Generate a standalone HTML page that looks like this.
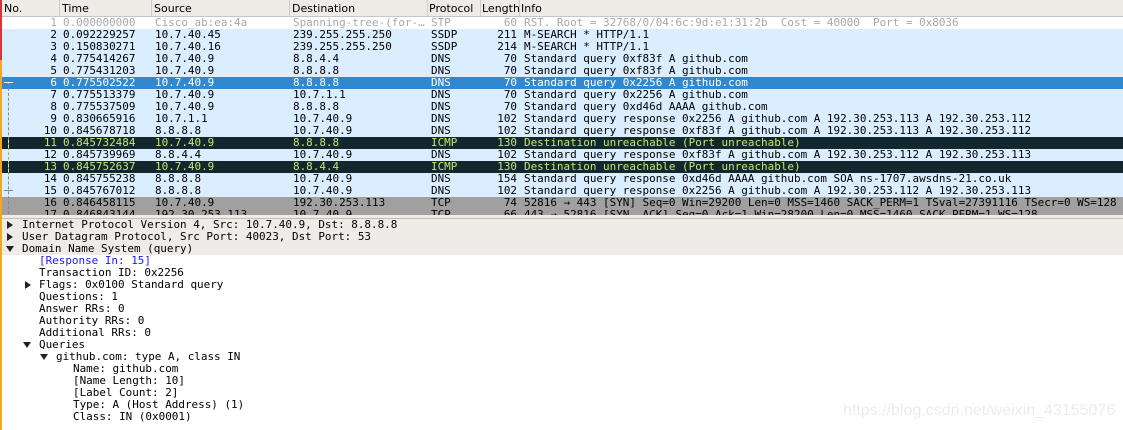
<!DOCTYPE html>
<html><head><meta charset="utf-8"><style>
*{margin:0;padding:0;box-sizing:border-box}
body{width:1123px;height:430px;overflow:hidden;background:#fff;position:relative;font-family:"DejaVu Sans Mono","Liberation Mono",monospace;font-size:10.95px}
.hdr{position:absolute;left:0;top:0;width:1123px;height:17px;background:#efebe7;border-bottom:1px solid #c9c5c0;font-family:"DejaVu Sans","Liberation Sans",sans-serif;font-size:11px;color:#000}
.hdr span{position:absolute;top:2px}
.hdr i{position:absolute;top:0;height:16px;border-left:1px solid #cfcbc6}
.r{position:absolute;left:0;width:1123px;height:12px;line-height:12px;white-space:pre;color:#000}
.r span{position:absolute;top:0}
.b{background:#daeeff}
.sel{background:#3089d0;color:#fff}
.dk{background:#12272e;color:#c4e86c}
.gr{background:#a0a0a0;color:#000}
.w1{background:#fff;color:#a8a8a8}
.no{right:1066px;text-align:right}
.len{right:606px;text-align:right}
.d{position:absolute;left:0;width:1123px;height:12px;line-height:12px;white-space:pre;color:#000}
.d span{position:absolute;top:0}
.tri{position:absolute;width:0;height:0}
.tr{border-top:4px solid transparent;border-bottom:4px solid transparent;border-left:6px solid #222;top:2px}
.td{border-left:4px solid transparent;border-right:4px solid transparent;border-top:6px solid #222;top:3px}
</style></head><body>
<div class="hdr">
<span style="left:4px">No.</span><i style="left:59px"></i>
<span style="left:62px">Time</span><i style="left:151px"></i>
<span style="left:154px">Source</span><i style="left:289px"></i>
<span style="left:292px">Destination</span><i style="left:427px"></i>
<span style="left:429px">Protocol</span><i style="left:480px"></i>
<span style="left:482px">Length</span><i style="left:519px"></i>
<span style="left:521px">Info</span>
</div>

<div class="r w1" style="top:17px"><span class="no">1</span><span style="left:63px">0.000000000</span><span style="left:155px">Cisco_ab:ea:4a</span><span style="left:293px">Spanning-tree-(for-…</span><span style="left:431px">STP</span><span class="len">60</span><span style="left:524px">RST. Root = 32768/0/04:6c:9d:e1:31:2b  Cost = 40000  Port = 0x8036</span></div>
<div class="r b" style="top:29px"><span class="no">2</span><span style="left:63px">0.092229257</span><span style="left:155px">10.7.40.45</span><span style="left:293px">239.255.255.250</span><span style="left:431px">SSDP</span><span class="len">211</span><span style="left:524px">M-SEARCH * HTTP/1.1</span></div>
<div class="r b" style="top:41px"><span class="no">3</span><span style="left:63px">0.150830271</span><span style="left:155px">10.7.40.16</span><span style="left:293px">239.255.255.250</span><span style="left:431px">SSDP</span><span class="len">214</span><span style="left:524px">M-SEARCH * HTTP/1.1</span></div>
<div class="r b" style="top:53px"><span class="no">4</span><span style="left:63px">0.775414267</span><span style="left:155px">10.7.40.9</span><span style="left:293px">8.8.4.4</span><span style="left:431px">DNS</span><span class="len">70</span><span style="left:524px">Standard query 0xf83f A github.com</span></div>
<div class="r b" style="top:65px"><span class="no">5</span><span style="left:63px">0.775431203</span><span style="left:155px">10.7.40.9</span><span style="left:293px">8.8.8.8</span><span style="left:431px">DNS</span><span class="len">70</span><span style="left:524px">Standard query 0xf83f A github.com</span></div>
<div class="r sel" style="top:77px"><span class="no">6</span><span style="left:63px">0.775502522</span><span style="left:155px">10.7.40.9</span><span style="left:293px">8.8.8.8</span><span style="left:431px">DNS</span><span class="len">70</span><span style="left:524px">Standard query 0x2256 A github.com</span></div>
<div class="r b" style="top:89px"><span class="no">7</span><span style="left:63px">0.775513379</span><span style="left:155px">10.7.40.9</span><span style="left:293px">10.7.1.1</span><span style="left:431px">DNS</span><span class="len">70</span><span style="left:524px">Standard query 0x2256 A github.com</span></div>
<div class="r b" style="top:101px"><span class="no">8</span><span style="left:63px">0.775537509</span><span style="left:155px">10.7.40.9</span><span style="left:293px">8.8.8.8</span><span style="left:431px">DNS</span><span class="len">70</span><span style="left:524px">Standard query 0xd46d AAAA github.com</span></div>
<div class="r b" style="top:113px"><span class="no">9</span><span style="left:63px">0.830665916</span><span style="left:155px">10.7.1.1</span><span style="left:293px">10.7.40.9</span><span style="left:431px">DNS</span><span class="len">102</span><span style="left:524px">Standard query response 0x2256 A github.com A 192.30.253.113 A 192.30.253.112</span></div>
<div class="r b" style="top:125px"><span class="no">10</span><span style="left:63px">0.845678718</span><span style="left:155px">8.8.8.8</span><span style="left:293px">10.7.40.9</span><span style="left:431px">DNS</span><span class="len">102</span><span style="left:524px">Standard query response 0xf83f A github.com A 192.30.253.113 A 192.30.253.112</span></div>
<div class="r dk" style="top:137px"><span class="no">11</span><span style="left:63px">0.845732484</span><span style="left:155px">10.7.40.9</span><span style="left:293px">8.8.8.8</span><span style="left:431px">ICMP</span><span class="len">130</span><span style="left:524px">Destination unreachable (Port unreachable)</span></div>
<div class="r b" style="top:149px"><span class="no">12</span><span style="left:63px">0.845739969</span><span style="left:155px">8.8.4.4</span><span style="left:293px">10.7.40.9</span><span style="left:431px">DNS</span><span class="len">102</span><span style="left:524px">Standard query response 0xf83f A github.com A 192.30.253.112 A 192.30.253.113</span></div>
<div class="r dk" style="top:161px"><span class="no">13</span><span style="left:63px">0.845752637</span><span style="left:155px">10.7.40.9</span><span style="left:293px">8.8.4.4</span><span style="left:431px">ICMP</span><span class="len">130</span><span style="left:524px">Destination unreachable (Port unreachable)</span></div>
<div class="r b" style="top:173px"><span class="no">14</span><span style="left:63px">0.845755238</span><span style="left:155px">8.8.8.8</span><span style="left:293px">10.7.40.9</span><span style="left:431px">DNS</span><span class="len">154</span><span style="left:524px">Standard query response 0xd46d AAAA github.com SOA ns-1707.awsdns-21.co.uk</span></div>
<div class="r b" style="top:185px"><span class="no">15</span><span style="left:63px">0.845767012</span><span style="left:155px">8.8.8.8</span><span style="left:293px">10.7.40.9</span><span style="left:431px">DNS</span><span class="len">102</span><span style="left:524px">Standard query response 0x2256 A github.com A 192.30.253.112 A 192.30.253.113</span></div>
<div class="r gr" style="top:197px"><span class="no">16</span><span style="left:63px">0.846458115</span><span style="left:155px">10.7.40.9</span><span style="left:293px">192.30.253.113</span><span style="left:431px">TCP</span><span class="len">74</span><span style="left:524px">52816 → 443 [SYN] Seq=0 Win=29200 Len=0 MSS=1460 SACK_PERM=1 TSval=27391116 TSecr=0 WS=128</span></div>
<div style="position:absolute;top:209px;left:0;width:1123px;height:6px;overflow:hidden"><div class="r gr" style="top:0"><span class="no">17</span><span style="left:63px">0.846843144</span><span style="left:155px">192.30.253.113</span><span style="left:293px">10.7.40.9</span><span style="left:431px">TCP</span><span class="len">66</span><span style="left:524px">443 → 52816 [SYN, ACK] Seq=0 Ack=1 Win=28200 Len=0 MSS=1460 SACK_PERM=1 WS=128</span></div></div>
<div style="position:absolute;top:215px;left:0;width:1123px;height:4px;background:#efebe7;border-bottom:1px solid #c0bcb7"></div>

<div style="position:absolute;left:8px;top:83px;width:0;height:131px;border-left:1px dashed #888"></div>
<div style="position:absolute;left:8px;top:140px;width:0;height:32px;border-left:1px dashed #e8f090"></div>
<div style="position:absolute;left:4px;top:82px;width:9px;height:1px;background:#fff"></div>
<div style="position:absolute;left:4px;top:190px;width:9px;height:1px;background:#888"></div>

<div class="d" style="top:219px;background:#efebe7"><div class="tri tr" style="left:7px"></div><span style="left:22px">Internet Protocol Version 4, Src: 10.7.40.9, Dst: 8.8.8.8</span></div>
<div class="d" style="top:231px;background:#efebe7"><div class="tri tr" style="left:7px"></div><span style="left:22px">User Datagram Protocol, Src Port: 40023, Dst Port: 53</span></div>
<div class="d" style="top:243px;background:#efebe7"><div class="tri td" style="left:6px"></div><span style="left:22px">Domain Name System (query)</span></div>
<div class="d" style="top:255px"><span style="left:39px;color:#1a1af0">[Response In: 15]</span></div>
<div class="d" style="top:267px"><span style="left:39px">Transaction ID: 0x2256</span></div>
<div class="d" style="top:279px"><div class="tri tr" style="left:25px"></div><span style="left:39px">Flags: 0x0100 Standard query</span></div>
<div class="d" style="top:291px"><span style="left:39px">Questions: 1</span></div>
<div class="d" style="top:303px"><span style="left:39px">Answer RRs: 0</span></div>
<div class="d" style="top:315px"><span style="left:39px">Authority RRs: 0</span></div>
<div class="d" style="top:327px"><span style="left:39px">Additional RRs: 0</span></div>
<div class="d" style="top:339px"><div class="tri td" style="left:23px"></div><span style="left:39px">Queries</span></div>
<div class="d" style="top:351px"><div class="tri td" style="left:40px"></div><span style="left:56px">github.com: type A, class IN</span></div>
<div class="d" style="top:363px"><span style="left:73px">Name: github.com</span></div>
<div class="d" style="top:375px"><span style="left:73px">[Name Length: 10]</span></div>
<div class="d" style="top:387px"><span style="left:73px">[Label Count: 2]</span></div>
<div class="d" style="top:399px"><span style="left:73px">Type: A (Host Address) (1)</span></div>
<div class="d" style="top:411px"><span style="left:73px">Class: IN (0x0001)</span></div>

<div style="position:absolute;left:843px;top:402px;font-family:'Liberation Sans',sans-serif;font-size:16px;color:#ececec;white-space:nowrap">https://blog.csdn.net/weixin_43155076</div>

<div style="position:absolute;left:0;top:0;width:2px;height:60px;background:#d8353a"></div>
<div style="position:absolute;left:0;top:60px;width:2px;height:370px;background:#f5a623"></div>
</body></html>
